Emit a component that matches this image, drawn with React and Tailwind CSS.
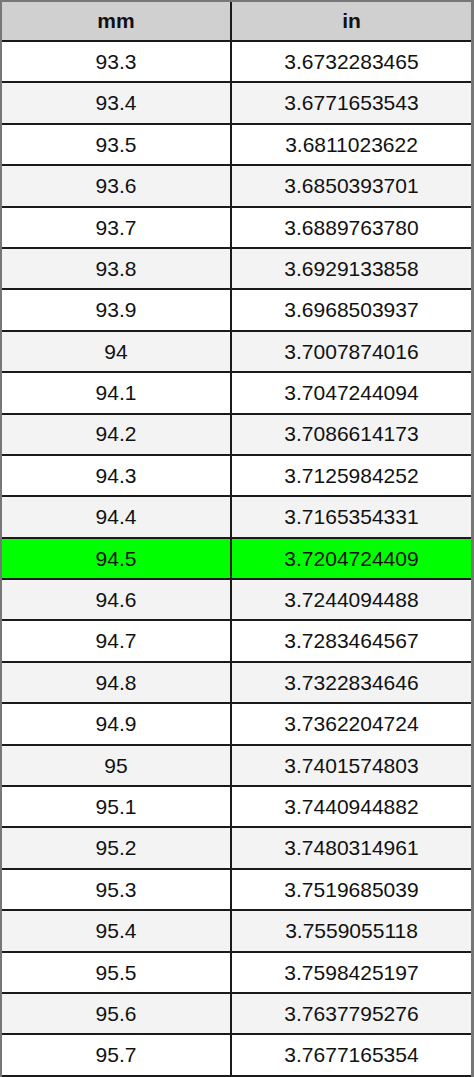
const rows = [
  ['93.3', '3.6732283465'],
  ['93.4', '3.6771653543'],
  ['93.5', '3.6811023622'],
  ['93.6', '3.6850393701'],
  ['93.7', '3.6889763780'],
  ['93.8', '3.6929133858'],
  ['93.9', '3.6968503937'],
  ['94', '3.7007874016'],
  ['94.1', '3.7047244094'],
  ['94.2', '3.7086614173'],
  ['94.3', '3.7125984252'],
  ['94.4', '3.7165354331'],
  ['94.5', '3.7204724409'],
  ['94.6', '3.7244094488'],
  ['94.7', '3.7283464567'],
  ['94.8', '3.7322834646'],
  ['94.9', '3.7362204724'],
  ['95', '3.7401574803'],
  ['95.1', '3.7440944882'],
  ['95.2', '3.7480314961'],
  ['95.3', '3.7519685039'],
  ['95.4', '3.7559055118'],
  ['95.5', '3.7598425197'],
  ['95.6', '3.7637795276'],
  ['95.7', '3.7677165354'],
];

export default function App() {
  return (
    <div className="w-[474px] h-[1077px] bg-white font-['Liberation_Sans',Arial,sans-serif] text-[21px] text-[#111]">
      <div className="border-t-2 border-l-2 border-r-[3px] border-[#777]">
        {/* cabecera */}
        <div className="grid grid-cols-[230px_1fr] h-[40px] bg-[#d0d0d0] border-b-2 border-[#1a1a1a] font-bold">
          <div className="flex items-center justify-center border-r-2 border-[#1a1a1a]">mm</div>
          <div className="flex items-center justify-center">in</div>
        </div>
        {rows.map(([mm, inch], i) => {
          const hl = mm === '94.5';
          const bg = hl ? 'bg-[#00ff00]' : i % 2 === 0 ? 'bg-white' : 'bg-[#f3f3f3]';
          return (
            <div key={mm} className={`grid grid-cols-[230px_1fr] h-[41.4px] border-b-2 border-[#1a1a1a] ${bg}`}>
              <div className="flex items-center justify-center border-r-2 border-[#1a1a1a]">{mm}</div>
              <div className="flex items-center justify-center">{inch}</div>
            </div>
          );
        })}
      </div>
    </div>
  );
}
